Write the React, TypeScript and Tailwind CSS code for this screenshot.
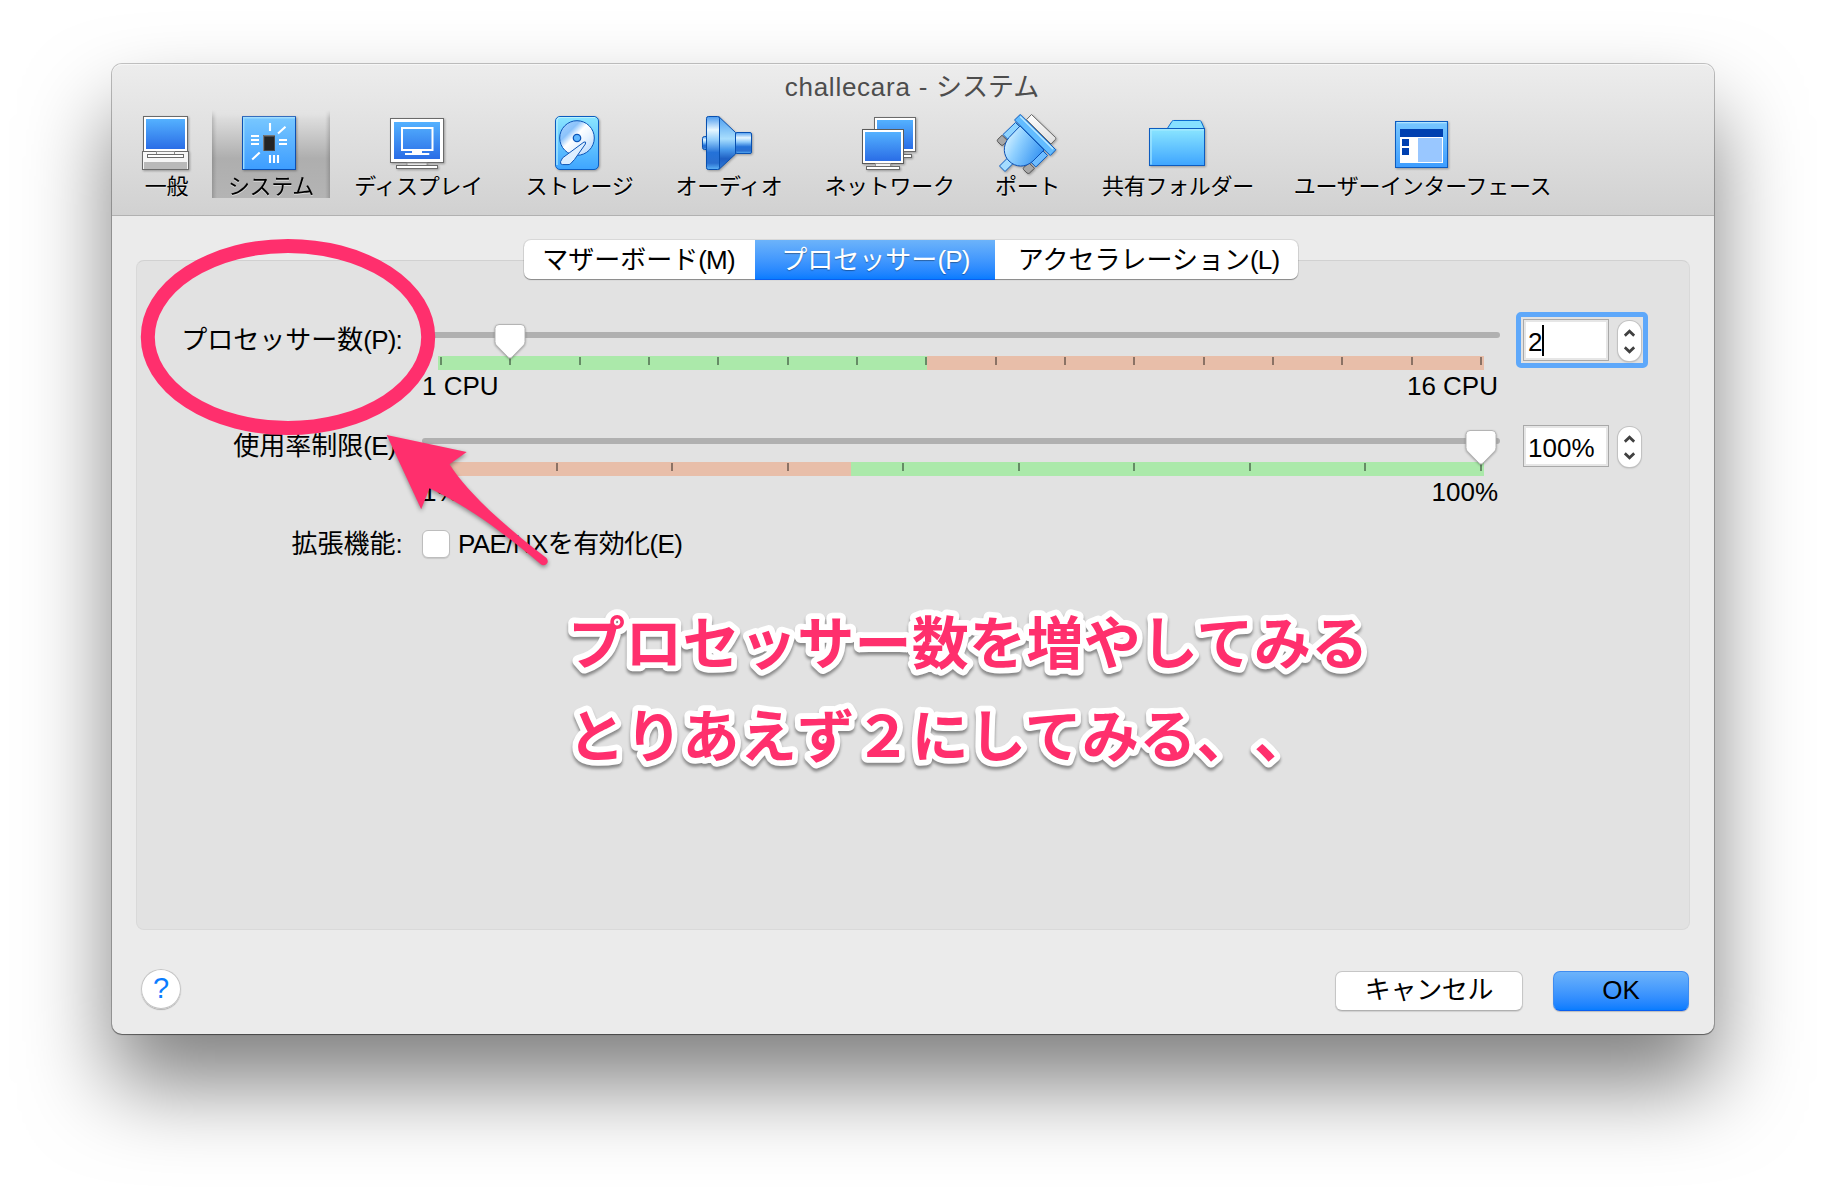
import type { ReactNode } from "react";

const FONT = "font-['Liberation_Sans','Noto_Sans_CJK_JP',sans-serif]";

function Gradients() {
  return (
    <svg width="0" height="0" className="absolute">
      <defs>
        <linearGradient id="screen" x1="0" y1="0" x2="0" y2="1">
          <stop offset="0" stopColor="#54b1ff" />
          <stop offset="1" stopColor="#2a6de6" />
        </linearGradient>
        <linearGradient id="sky" x1="0" y1="0" x2="0" y2="1">
          <stop offset="0" stopColor="#79c8ff" />
          <stop offset="1" stopColor="#3d9dff" />
        </linearGradient>
        <linearGradient id="aqua" x1="0" y1="0" x2="0" y2="1">
          <stop offset="0" stopColor="#8be6ff" />
          <stop offset="1" stopColor="#3ea5ff" />
        </linearGradient>
        <linearGradient id="metal" x1="0" y1="0" x2="0" y2="1">
          <stop offset="0" stopColor="#4b9bf0" />
          <stop offset="0.25" stopColor="#e8f7ff" />
          <stop offset="0.45" stopColor="#8fcbfb" />
          <stop offset="0.68" stopColor="#2472d8" />
          <stop offset="0.88" stopColor="#2a6fd0" />
          <stop offset="1" stopColor="#5cb4f8" />
        </linearGradient>
        <linearGradient id="cone" x1="0" y1="0" x2="0" y2="1">
          <stop offset="0" stopColor="#4e9ff0" />
          <stop offset="0.42" stopColor="#a9defd" />
          <stop offset="0.62" stopColor="#4a9bec" />
          <stop offset="0.8" stopColor="#1f5fc2" />
          <stop offset="1" stopColor="#2f7ad8" />
        </linearGradient>
        <linearGradient id="plug" x1="0" y1="0.3" x2="1" y2="0.8">
          <stop offset="0" stopColor="#d8f2ff" />
          <stop offset="0.35" stopColor="#8fd0ff" />
          <stop offset="1" stopColor="#2b8cf0" />
        </linearGradient>
        <linearGradient id="paper" x1="0" y1="0" x2="0" y2="1">
          <stop offset="0" stopColor="#ffffff" />
          <stop offset="1" stopColor="#dedede" />
        </linearGradient>
        <linearGradient id="disc" x1="0" y1="0" x2="1" y2="1">
          <stop offset="0" stopColor="#a9d4ff" />
          <stop offset="0.3" stopColor="#8cc3fb" />
          <stop offset="0.45" stopColor="#ffffff" />
          <stop offset="0.65" stopColor="#e6f2ff" />
          <stop offset="1" stopColor="#a6cffb" />
        </linearGradient>
      </defs>
    </svg>
  );
}

function GeneralIcon() {
  return (
    <g>
      <rect x="9.5" y="6.5" width="44" height="35" fill="#fff" stroke="#6a6a6a" />
      <rect x="12" y="9" width="39" height="30" fill="url(#screen)" />
      <rect x="8.5" y="41.5" width="46" height="18" fill="#f6f6f6" stroke="#6a6a6a" />
      <rect x="10" y="52" width="43" height="7" fill="#b9b9b9" />
      <rect x="22.5" y="41.5" width="18" height="3" fill="#f6f6f6" stroke="#8a8a8a" />
      <rect x="13.5" y="44.5" width="36" height="3" fill="#fff" stroke="#6a6a6a" />
    </g>
  );
}

function SystemIcon() {
  return (
    <g>
      <rect x="3.5" y="6.5" width="53" height="53" fill="url(#sky)" stroke="#0c50b4" />
      <path d="M4.7 59V7.7H56" fill="none" stroke="#9bdcff" strokeWidth="1.4" />
      <path
        d="M31 13v8M39 23.5l7.5-6.8M12 26h8M12 30h8M12 34h8M40 30h8M40 34h8M13.2 49.4l7.5-7M31 45v8M35 45v8M39 45v8"
        stroke="#fff"
        strokeWidth="2.1"
      />
      <rect x="24" y="25" width="12" height="16" fill="#4a4a4a" />
      <rect x="25.5" y="27" width="9.5" height="13" fill="#242424" />
      <path d="M24.5 41V25.5H36" fill="none" stroke="#777" />
    </g>
  );
}

function DisplayIcon() {
  return (
    <g>
      <rect x="4.5" y="8.5" width="53" height="44" fill="#fff" stroke="#6a6a6a" />
      <rect x="8" y="12" width="46" height="37" fill="url(#screen)" />
      <rect x="16" y="18" width="30.5" height="22" fill="none" stroke="#fff" strokeWidth="2" />
      <path d="M26 42h10M19 44h24.3" stroke="#fff" strokeWidth="2.2" />
      <rect x="21" y="53" width="20" height="3" fill="#e6e6e6" stroke="#8a8a8a" strokeWidth="0.8" />
      <rect x="10.5" y="55.5" width="41" height="3" fill="#fff" stroke="#6a6a6a" />
    </g>
  );
}

function StorageIcon() {
  return (
    <g>
      <rect x="8.5" y="6.5" width="43" height="53" rx="4.5" fill="url(#aqua)" stroke="#0c5cc0" />
      <path d="M10 55V11q0-3.500 3.500-3.500H48" fill="none" stroke="#b8f2ff" strokeWidth="1.2" />
      <circle cx="30" cy="28" r="17.3" fill="url(#disc)" stroke="#0c55b8" />
      <circle cx="30" cy="28" r="3.7" fill="#5fb7ff" stroke="#0c55b8" strokeWidth="1.3" />
      <path
        d="M37 32Q39.5 31.2 38.4 34L27.5 49.5L23.5 53.8Q22.5 54.700 21 54.6L15.5 54.6Q12.8 54.4 13.6 51.6Q14.5 47.5 20 44.6Z"
        fill="#dceeff"
        stroke="#0c55b8"
      />
    </g>
  );
}

function AudioIcon() {
  return (
    <g stroke="#0850b0">
      <rect x="5.5" y="26.5" width="6" height="13" rx="2" fill="url(#metal)" />
      <path d="M22 6.800L38.5 22.5V44L22 59.300Z" fill="url(#cone)" />
      <rect x="9.5" y="6.5" width="13" height="53" rx="1.8" fill="url(#metal)" />
      <rect x="38.5" y="22.5" width="16" height="21" rx="1.5" fill="url(#metal)" />
    </g>
  );
}

function NetworkIcon() {
  return (
    <g>
      <rect x="17.5" y="7.5" width="41" height="34" fill="#fff" stroke="#6a6a6a" />
      <rect x="20" y="10" width="36" height="29" fill="url(#screen)" />
      <rect x="44.5" y="44.5" width="10" height="3" fill="#fff" stroke="#6a6a6a" />
      <rect x="5.5" y="19.5" width="41" height="34" fill="#fff" stroke="#5a5a5a" />
      <rect x="8" y="22" width="36" height="29" fill="url(#screen)" />
      <rect x="18.5" y="53.5" width="15" height="3" fill="#f2f2f2" stroke="#8a8a8a" strokeWidth="0.8" />
      <rect x="9.5" y="56.5" width="33" height="3" fill="#fff" stroke="#6a6a6a" />
    </g>
  );
}

function PortIcon() {
  return (
    <g strokeLinejoin="round">
      <path d="M36.5 4.500L60.5 27.500Q61 28.500 60.5 29.300L56 34L31.5 9.700Z" fill="url(#paper)" stroke="#666" />
      <path d="M20.5 12.500L26 18L13.5 30L8 24.500Z" fill="#8fd4ff" stroke="#0c5cc0" />
      <path d="M7 25.300L12.5 30.700L8.2 35Q7 35.800 6 35L2.6 31.500Q1.8 30.300 2.8 29.300Z" fill="#a8a8a8" stroke="#555" />
      <path d="M47 40L52.5 45.500L40.8 57L35.5 51.500Z" fill="#6fbdff" stroke="#0c5cc0" />
      <path d="M34 53L39.5 58.300L34.5 63Q33.3 64 32 63L28.6 59.700Q27.8 58.500 28.7 57.500Z" fill="#a8a8a8" stroke="#555" />
      <path d="M12.5 48L18 53.500L10 61.500L4.5 56Z" fill="#a5dcff" stroke="#0c5cc0" />
      <path d="M25 16L14 27.500C7 36 8.5 45.500 14 51C20.5 57.500 30.5 58 38 51L49 40Z" fill="url(#plug)" stroke="#0c50b4" />
      <path d="M25.2 4.500L60.8 39.800L55.3 45.500L19.5 10Z" fill="#62bcff" stroke="#0c5cc0" />
      <path d="M25.2 6.500L58 39" stroke="#b8e8ff" strokeWidth="1.6" />
    </g>
  );
}

function FolderIcon() {
  return (
    <g>
      <path d="M21 19L26 11.300Q26.5 10.500 27.5 10.500H53.5Q54.7 10.500 55.2 11.600L58.5 19Z" fill="#86e0ff" stroke="#0c6cd0" />
      <rect x="3.5" y="18.5" width="55" height="37" fill="url(#aqua)" stroke="#0c5cc0" />
      <path d="M5 54.500V19.800H58" fill="none" stroke="#a8eaff" strokeWidth="1.2" />
    </g>
  );
}

function InterfaceIcon() {
  return (
    <g>
      <rect x="5.5" y="11.5" width="52" height="46" fill="url(#sky)" stroke="#0c5cc0" />
      <path d="M7 12.700H56.5" stroke="#b0e4ff" strokeWidth="1.3" />
      <rect x="10" y="19" width="43" height="8" fill="#0040b0" />
      <rect x="10" y="27" width="43" height="26" fill="#fff" />
      <rect x="28" y="28" width="24" height="24" fill="#99c7ff" />
      <rect x="12" y="29" width="7" height="7" fill="#0040b0" />
      <rect x="12" y="38" width="7" height="7" fill="#0040b0" />
    </g>
  );
}

type Tool = { label: string; width: string; icon: ReactNode; odd?: boolean; selected?: boolean };

const TOOLS: Tool[] = [
  { label: "一般", width: "w-[75px]", icon: <GeneralIcon />, odd: true },
  { label: "システム", width: "w-[118px]", icon: <SystemIcon />, selected: true },
  { label: "ディスプレイ", width: "w-[161px]", icon: <DisplayIcon />, odd: true },
  { label: "ストレージ", width: "w-[145px]", icon: <StorageIcon />, odd: true },
  { label: "オーディオ", width: "w-[138px]", icon: <AudioIcon /> },
  { label: "ネットワーク", width: "w-[167px]", icon: <NetworkIcon />, odd: true },
  { label: "ポート", width: "w-[93px]", icon: <PortIcon />, odd: true },
  { label: "共有フォルダー", width: "w-[192px]", icon: <FolderIcon /> },
  { label: "ユーザーインターフェース", width: "w-[281px]", icon: <InterfaceIcon />, odd: true },
];

function ToolButton({ tool }: { tool: Tool }) {
  const w = tool.odd ? 65 : 64;
  return (
    <div
      className={`flex h-[88px] shrink-0 flex-col items-center ${tool.width} ${
        tool.selected
          ? "[mask-image:linear-gradient(180deg,transparent,black_8px)] bg-[linear-gradient(90deg,rgba(0,0,0,.16),rgba(0,0,0,.05)_3px,transparent_5px,transparent_calc(100%-5px),rgba(0,0,0,.05)_calc(100%-3px),rgba(0,0,0,.16)),linear-gradient(180deg,#e6e6e6,#aeaeae_55%,#b4b4b4)]"
          : ""
      }`}
    >
      <svg
        width={w}
        height={64}
        viewBox={`0 0 ${w} 64`}
        className="shrink-0 overflow-visible drop-shadow-[1px_1px_1px_rgba(0,0,0,0.3)]"
      >
        {tool.icon}
      </svg>
      <span className="text-[22px] leading-[26px] tracking-[-0.3px] whitespace-nowrap text-black [text-shadow:0_1px_0_rgba(255,255,255,0.5)]">
        {tool.label}
      </span>
    </div>
  );
}

function Slider({
  ticks,
  lower,
  upper,
  split,
  handle,
  min,
  max,
}: {
  ticks: number;
  lower: string;
  upper: string;
  split: string;
  handle: string;
  min: string;
  max: string;
}) {
  return (
    <div className="w-[1078px] pt-5">
      <div className="relative h-1.5 rounded-full bg-[#b0b0b0]">
        <svg
          width="36"
          height="40"
          viewBox="0 0 36 40"
          className={`absolute -top-[10px] z-10 overflow-visible drop-shadow-[0_1px_1px_rgba(0,0,0,0.3)] ${handle}`}
        >
          <path
            d="M7 2.500h22q4 0 4 4v13q0 1.800-1 3.300L20 35q-2 2.400-4 0L4 22.800q-1-1.500-1-3.300v-13q0-4 4-4z"
            fill="#fff"
            stroke="#b4b4b4"
            strokeWidth="1"
          />
        </svg>
      </div>
      <div className={`mt-[18px] ml-4 h-[14px] w-[1046px] ${upper}`}>
        <div className={`h-[14px] ${split} ${lower}`} />
      </div>
      <div className="-mt-[13px] ml-[18px] flex h-[13px] w-[1042px] justify-between">
        {Array.from({ length: ticks }, (_, i) => (
          <div key={i} className="h-2 w-0.5 bg-black/40" />
        ))}
      </div>
      <div className="flex justify-between pr-[2px] text-[26px] leading-8">
        <span>{min}</span>
        <span>{max}</span>
      </div>
    </div>
  );
}

function SpinBox({ value, focused }: { value: string; focused?: boolean }) {
  return (
    <div
      className={`ml-4 flex h-14 w-[132px] gap-[9px] rounded-[5px] border-[5px] pt-0.5 pl-0.5 ${
        focused ? "border-[#5ea8fa]" : "border-transparent"
      }`}
    >
      <div className="flex h-[42px] w-[86px] items-center border border-[#a9a9a9] bg-white pl-0.5 shadow-[inset_0_0_0_2px_#e6e6e6]">
        <span className="pt-[3px] pl-[2px] text-[26px] leading-[38px]">{value}</span>
        {focused && <span className="h-[31px] w-0.5 bg-black" />}
      </div>
      <div className="mt-[2px] flex h-10 w-[23px] flex-col items-center justify-center gap-[9px] rounded-[11px] bg-white shadow-[0_0_0_1px_#c2c2c2,0_1px_2px_rgba(0,0,0,0.3)]">
        <svg width="11" height="8" viewBox="0 0 11 8">
          <path d="M0.8 6.700L5.5 2.200L10.2 6.700" fill="none" stroke="#404040" strokeWidth="2.7" />
        </svg>
        <svg width="11" height="8" viewBox="0 0 11 8">
          <path d="M0.8 1.300L5.5 5.800L10.2 1.300" fill="none" stroke="#404040" strokeWidth="2.7" />
        </svg>
      </div>
    </div>
  );
}

function Key({ children }: { children: ReactNode }) {
  return <span className="tracking-[-0.8px]">{children}</span>;
}

function RowLabel({ children }: { children: ReactNode }) {
  return (
    <div className="mr-[20px] w-[265px] shrink-0 text-right text-[26px] leading-[56px] whitespace-nowrap">
      {children}
    </div>
  );
}

function Annotations() {
  return (
    <>
      <svg
        width="440"
        height="350"
        viewBox="130 230 440 350"
        className="pointer-events-none absolute top-[230px] left-[130px] z-20"
      >
        <ellipse cx="288" cy="337" rx="140.2" ry="91" fill="none" stroke="#ff2f6d" strokeWidth="14" />
        <path
          d="M386.7 435L466.7 452L449.5 464.300C466 490 497 520 546.5 558Q549 561.500 546.5 564Q543.5 566.500 540.5 564C500 530 470 508 429.5 488.300L421.2 509.300Z"
          fill="#ff2f6d"
          className="drop-shadow-[0_2px_2px_rgba(0,0,0,0.4)]"
        />
      </svg>
      <svg
        width="860"
        height="200"
        viewBox="0 0 860 200"
        className="pointer-events-none absolute top-[590px] left-[540px] z-20 overflow-visible text-[57px] font-bold drop-shadow-[0_3px_1.5px_rgba(0,0,0,0.4)] [text-spacing-trim:space-all]"
      >
        <g
          fill="#ff2f6d"
          stroke="#fff"
          strokeWidth="11.5"
          strokeLinejoin="round"
          paintOrder="stroke"
          letterSpacing="0.3"
        >
          <text x="28" y="74">
            プロセッサー数を増やしてみる
          </text>
          <text x="28" y="167">
            とりあえず２にしてみる、、
          </text>
        </g>
      </svg>
    </>
  );
}

export default function App() {
  return (
    <div className={`relative h-[1194px] w-[1826px] overflow-hidden bg-white pt-16 text-black ${FONT}`}>
      <Gradients />
      <div className="mx-auto h-[970px] w-[1602px] overflow-visible rounded-[10px] bg-[#ebebeb] shadow-[0_0_0_1px_rgba(0,0,0,0.22),0_1px_1px_rgba(0,0,0,0.35),0_50px_86px_rgba(0,0,0,0.5)]">
        <header className="h-[152px] rounded-t-[10px] border-b border-[#b1b1b1] bg-linear-to-b from-[#ededed] to-[#d1d1d1] pt-[6px] shadow-[inset_0_1px_0_#f6f6f6]">
          <h1 className="pr-[2px] text-center text-[26px] leading-[34px] text-[#4d4d4d]">
            <span className="tracking-[0.75px]">challecara - </span>システム
          </h1>
          <nav className="mt-[6px] flex gap-2 pl-[17px]">
            {TOOLS.map((t) => (
              <ToolButton key={t.label} tool={t} />
            ))}
          </nav>
        </header>

        <main className="mt-11 ml-6 h-[670px] w-[1554px] rounded-[8px] border border-[#d9d9d9] border-t-[#d1d1d1] bg-[#e2e2e2]">
          <div className="-mt-[21px] ml-[387px] flex h-[39px] w-[774px] rounded-[7px] bg-white text-center text-[26px] leading-[40px] whitespace-nowrap shadow-[0_0_0_1px_rgba(0,0,0,0.08),0_1px_1px_rgba(0,0,0,0.35)]">
            <div className="w-[231px] pr-[2px]">
              マザーボード<Key>(M)</Key>
            </div>
            <div className="w-[240px] bg-linear-to-b from-[#6cb3fa] to-[#077cff] pl-px text-white shadow-[0_1px_0_#0a5ff0] [text-shadow:0_1px_1px_rgba(0,0,0,0.35)]">
              プロセッサー<Key>(P)</Key>
            </div>
            <div className="w-[303px] pl-1">
              アクセラレーション<Key>(L)</Key>
            </div>
          </div>

          <div className="mt-[33px] flex h-[106px]">
            <RowLabel>
              プロセッサー数<Key>(P):</Key>
            </RowLabel>
            <Slider
              ticks={16}
              lower="bg-[#abe9aa]"
              upper="bg-[#e8bea9]"
              split="w-[489px]"
              handle="left-[70px]"
              min="1 CPU"
              max="16 CPU"
            />
            <SpinBox value="2" focused />
          </div>
          <div className="flex h-[106px]">
            <RowLabel>
              使用率制限<Key>(E):</Key>
            </RowLabel>
            <Slider
              ticks={10}
              lower="bg-[#e8bea9]"
              upper="bg-[#abe9aa]"
              split="w-[413px]"
              handle="left-[1041px]"
              min="1%"
              max="100%"
            />
            <SpinBox value="100%" />
          </div>
          <div className="flex h-10 items-center">
            <RowLabel>
              拡張機能<Key>:</Key>
            </RowLabel>
            <div className="size-7 rounded-[6px] border border-[#bdbdbd] bg-white shadow-[0_1px_1px_rgba(0,0,0,0.12)]" />
            <span className="ml-2 text-[26px] tracking-[-0.6px]">PAE/NXを有効化(E)</span>
          </div>
        </main>

        <footer className="mt-[39px] flex h-[42px] items-center pr-[25px] pl-[29px] text-[26px]">
          <div className="-mt-[2px] flex size-10 items-center justify-center rounded-full bg-white text-[29px] text-[#0a7cff] shadow-[inset_0_0_0_1px_#c4c4c4,0_1px_1px_rgba(0,0,0,0.25)]">
            ?
          </div>
          <div className="mt-[2px] ml-auto h-10 w-[188px] rounded-[7px] border border-[#c6c6c6] border-b-[#b0b0b0] bg-white text-center leading-[37px] tracking-[-0.3px] shadow-[0_1px_1px_rgba(0,0,0,0.12)]">
            キャンセル
          </div>
          <div className="mt-[2px] ml-[30px] h-10 w-[136px] rounded-[7px] border border-[#3f8cf0] border-b-[#0a5ff0] bg-linear-to-b from-[#6cb3fa] to-[#077cff] text-center leading-[37px] shadow-[0_1px_1px_rgba(0,0,0,0.2)]">
            OK
          </div>
        </footer>
      </div>
      <Annotations />
    </div>
  );
}
